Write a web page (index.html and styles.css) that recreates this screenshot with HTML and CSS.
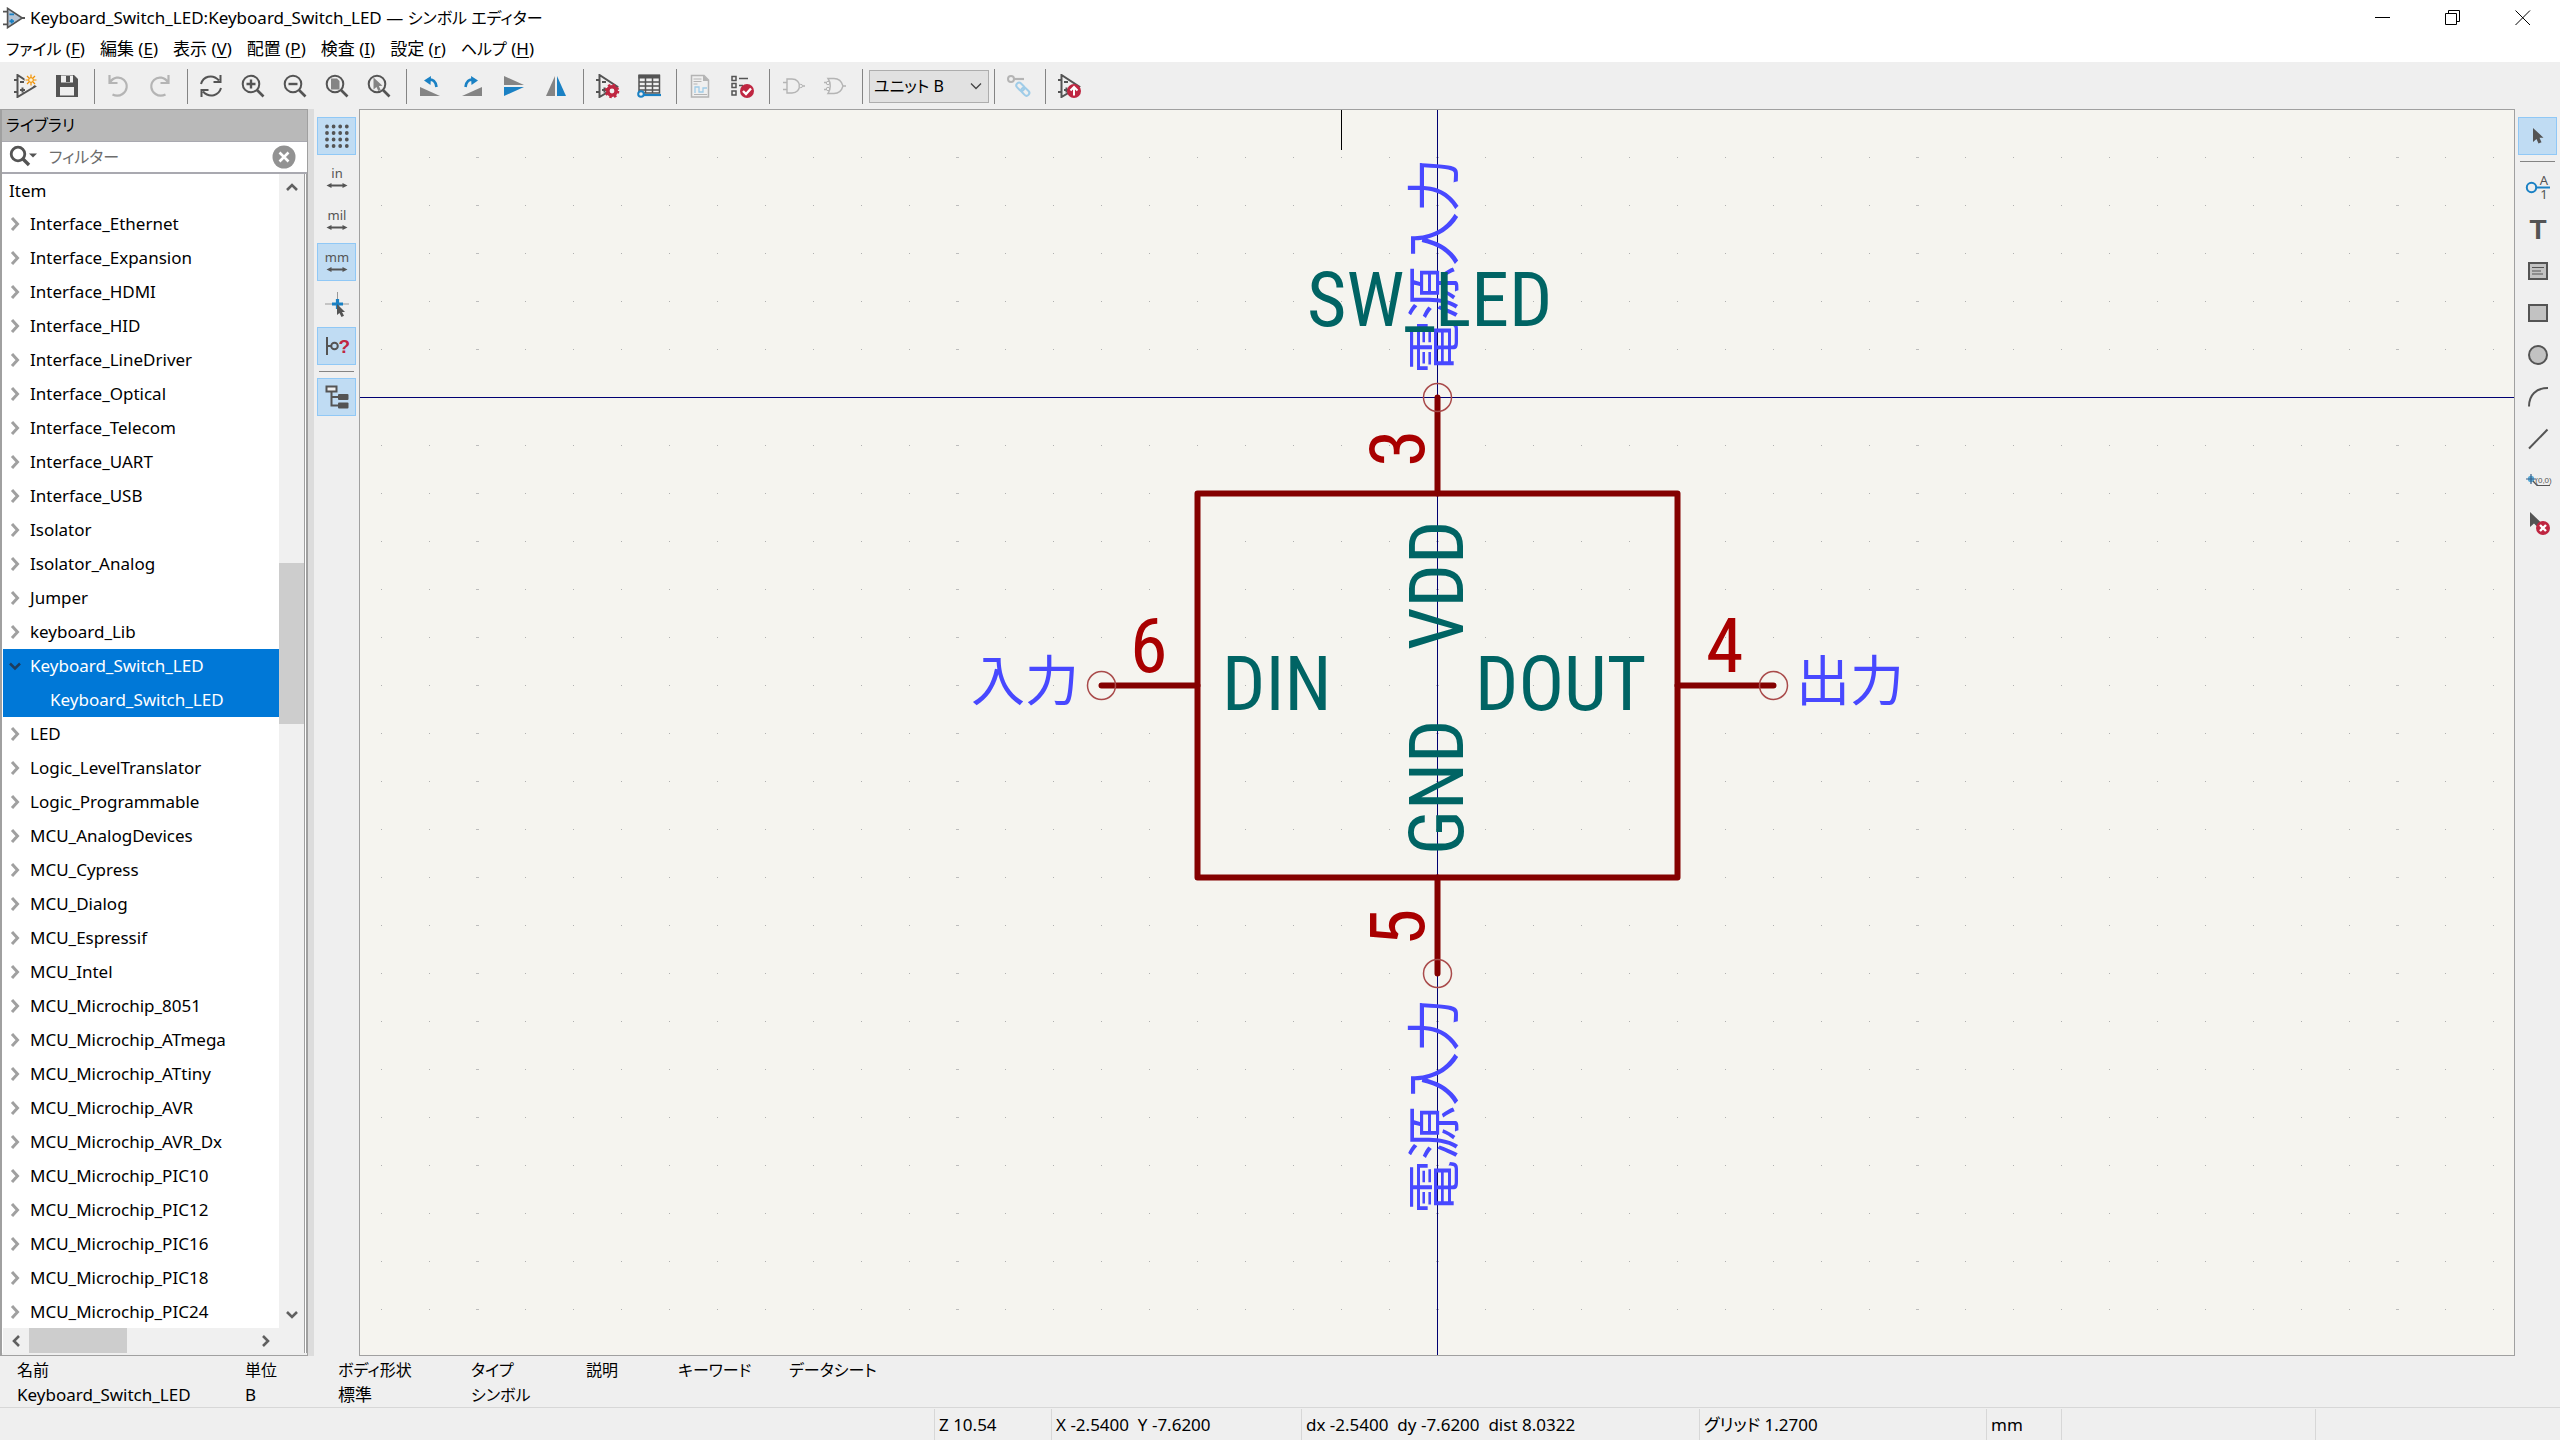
FILE: index.html
```html
<!DOCTYPE html>
<html lang="ja">
<head>
<meta charset="utf-8">
<title>Keyboard_Switch_LED:Keyboard_Switch_LED — シンボル エディター</title>
<link rel="stylesheet" href="styles.css">
</head>
<body>
<svg class="defs" aria-hidden="true">
  <defs>
    <symbol id="opamp" viewBox="0 0 24 24"><path class="ln" d="M4.500 1v22L22 12.500zM1 6h3.500M1 18h3.500M7 8h4M7 16h5M9.500 13.500v5"/></symbol>
    <symbol id="chev-r" viewBox="0 0 12 16"><path d="M3 2l5.500 6L3 14" fill="none" stroke="currentColor" stroke-width="3"/></symbol>
    <symbol id="chev-d" viewBox="0 0 12 16"><path d="M1 5.500l5 5 5-5" fill="none" stroke="currentColor" stroke-width="2.500"/></symbol>
    <symbol id="sb" viewBox="0 0 16 16"><path d="M3 11l5-5 5 5" fill="none" stroke="#606060" stroke-width="2.600"/></symbol>
    <symbol id="lens" viewBox="0 0 24 24"><circle class="ln" cx="10" cy="10" r="8.300"/><path d="M16 16l6.500 6.500" fill="none" stroke="#545454" stroke-width="2.600"/></symbol>
    <symbol id="dim" viewBox="0 0 24 24"><path d="M5 19.500h14" stroke="#545454" stroke-width="2"/><path d="M1.500 19.500l5-2.500v5zM22.500 19.500l-5-2.500v5z" fill="#545454"/></symbol>
  </defs>
</svg>

<header class="titlebar">
  <svg class="app-icon" viewBox="0 0 24 24"><path d="M5 1.500v21l16-10.500z" fill="#b5c3d3" stroke="#545454" stroke-width="1.800"/><path class="ln" d="M0 5h5M0 19h5M20 12h4"/><path class="bl" d="M7 8h5M7 15.500h5M9.500 13v5"/></svg>
  <h1>Keyboard_Switch_LED:Keyboard_Switch_LED — <span class="kana">シンボル エディター</span></h1>
  <div class="win-controls">
    <button aria-label="最小化"><svg viewBox="0 0 16 16"><path d="M0 7.500h15"/></svg></button>
    <button aria-label="元に戻す"><svg viewBox="0 0 16 16"><path d="M.500 3.500h11v11H.500zM3.500 3.500v-3h11v11h-3"/></svg></button>
    <button aria-label="閉じる"><svg viewBox="0 0 16 16"><path d="M.500.500l14.500 14.500M15 .500L.500 15"/></svg></button>
  </div>
</header>

<nav class="menubar">
  <button><span class="kana">ファイル</span> (<u>F</u>)</button><button>編集 (<u>E</u>)</button><button>表示 (<u>V</u>)</button><button>配置 (<u>P</u>)</button><button>検査 (<u>I</u>)</button><button>設定 (<u>r</u>)</button><button><span class="kana">ヘルプ</span> (<u>H</u>)</button>
</nav>

<div class="toolbar" role="toolbar">
  <button class="tool" aria-label="新規シンボル"><svg viewBox="0 0 24 24"><use href="#opamp"/><circle cx="18" cy="6" r="6.500" fill="#efefef"/><path d="M18 .500v11M12.500 6h11M14 2l8 8M22 2l-8 8" stroke="#f29100" stroke-width="1.200"/><circle cx="18" cy="6" r="2.300" fill="#fff3d0" stroke="#f29100"/></svg></button>
  <button class="tool" aria-label="保存"><svg viewBox="0 0 24 24"><path d="M1 1h18l4 4v18H1z" fill="#545454"/><path d="M6 1.500h12v7H6zM5 13h14v8.500H5z" fill="#efefef"/><path d="M11 2h4v6h-4z" fill="#545454"/></svg></button>
  <span class="sep"></span>
  <button class="tool" aria-label="元に戻す" disabled><svg viewBox="0 0 24 24"><path class="off" d="M3.500 1v8h8M4 8.500C7 3 14 2 18 6c4.500 4.500 3 11-1.500 14-3 2-7 2-10 .500"/></svg></button>
  <button class="tool" aria-label="やり直し" disabled><svg viewBox="0 0 24 24"><path class="off" d="M20.500 1v8h-8M20 8.500C17 3 10 2 6 6c-4.500 4.500-3 11 1.500 14 3 2 7 2 10 .500"/></svg></button>
  <span class="sep"></span>
  <button class="tool" aria-label="再描画"><svg viewBox="0 0 24 24"><path class="ln" d="M2 10C4 3 13-1 20 6.500M22 14c-2 7-11 11-18 3.500M21.500 1v7h-7M2.500 23v-7h7"/></svg></button>
  <button class="tool" aria-label="拡大"><svg viewBox="0 0 24 24"><use href="#lens"/><path class="hv" d="M10 5.500v9M5.500 10h9"/></svg></button>
  <button class="tool" aria-label="縮小"><svg viewBox="0 0 24 24"><use href="#lens"/><path class="hv" d="M5.500 10h9"/></svg></button>
  <button class="tool" aria-label="全体表示"><svg viewBox="0 0 24 24"><use href="#lens"/><path d="M6 4.500h6l2.500 2.500v8.500H6z" fill="#848484"/></svg></button>
  <button class="tool" aria-label="オブジェクトに合わせる"><svg viewBox="0 0 24 24"><use href="#lens"/><path d="M6.500 3.500v12l3-2.500 1.800 4 2.400-1-1.800-4 3.600-.300z" fill="#848484"/></svg></button>
  <span class="sep"></span>
  <button class="tool" aria-label="左回転"><svg viewBox="0 0 24 24"><path d="M2 13v9h20z" fill="#848484"/><path d="M10 6c5-1.500 8 2 8.500 7" fill="none" stroke="#1a81c4" stroke-width="2.600"/><path d="M6 6.500L13 2l-.500 9z" fill="#1a81c4"/></svg></button>
  <button class="tool" aria-label="右回転"><svg viewBox="0 0 24 24"><path d="M22 13v9H2z" fill="#848484"/><path d="M14 6c-5-1.500-8 2-8.500 7" fill="none" stroke="#1a81c4" stroke-width="2.600"/><path d="M18 6.500L11 2l.500 9z" fill="#1a81c4"/></svg></button>
  <button class="tool" aria-label="上下反転"><svg viewBox="0 0 24 24"><path d="M2 2v9h20z" fill="#848484"/><path d="M2 22v-9h20z" fill="#1a81c4"/></svg></button>
  <button class="tool" aria-label="左右反転"><svg viewBox="0 0 24 24"><path d="M2 22h9V2z" fill="#848484"/><path d="M22 22h-9V2z" fill="#1a81c4"/></svg></button>
  <span class="sep"></span>
  <button class="tool" aria-label="シンボルのプロパティ"><svg viewBox="0 0 24 24"><use href="#opamp"/><circle cx="17" cy="17" r="4.200" fill="#efefef" stroke="#bf2641" stroke-width="3.600"/><circle cx="17" cy="17" r="6.300" fill="none" stroke="#bf2641" stroke-width="2" stroke-dasharray="2.500 2.450"/></svg></button>
  <button class="tool" aria-label="ピンテーブル"><svg viewBox="0 0 24 24"><path class="thin" d="M2 1.500h20.500v17.500H2zM2 8h20M2 12h20M2 16h20M8.500 4v15M15.500 4v15"/><path d="M1.500.500h21.500v4H1.500z" fill="#545454"/><path d="M7 21h17" stroke="#1a81c4" stroke-width="2.200"/><circle cx="4" cy="20" r="2.800" fill="#efefef" stroke="#1a81c4" stroke-width="2"/></svg></button>
  <span class="sep"></span>
  <button class="tool" aria-label="データシート" disabled><svg viewBox="0 0 24 24"><path d="M3.500 1.500h12.500l4.500 4.500v17h-17z" fill="none" stroke="#b4b4b4" stroke-width="1.500"/><path d="M15 1l6 6h-6z" fill="#b4b4b4"/><path d="M5.500 5h8M5.500 7.500h8M5.500 10h4M6 20.500h13" stroke="#b4b4b4"/><path d="M7 19v-6h4v5h4v-4h4" fill="none" stroke="#9fcce8" stroke-width="1.300"/></svg></button>
  <button class="tool" aria-label="シンボルチェッカー"><svg viewBox="0 0 24 24"><path class="thin" d="M2 2.500h4v4H2zM2 9.500h4v4H2zM2 17h4v4H2zM9 4.500h9M9 11.500h4"/><circle cx="17" cy="17" r="7" fill="#bf2641"/><path d="M13 17l3 3 5-5.500" fill="none" stroke="#fff" stroke-width="2.400"/></svg></button>
  <span class="sep"></span>
  <button class="tool" aria-label="標準表示" disabled><svg viewBox="0 0 24 24"><path d="M6 5v14h5c10 0 10-14 0-14zM2 8.500h4M2 15.500h4M21.500 12H24" fill="none" stroke="#b4b4b4" stroke-width="1.400"/><circle cx="19.800" cy="12" r="1.700" fill="#efefef" stroke="#b4b4b4"/></svg></button>
  <button class="tool" aria-label="ド・モルガン表示" disabled><svg viewBox="0 0 24 24"><path d="M5 4.500h6c5 0 8 4 9 7.500-1 3.500-4 7.500-9 7.500H5c3-4 3-11 0-15zM1 8.500h2M1 15.500h2M20 12h3" fill="none" stroke="#b4b4b4" stroke-width="1.400"/><circle cx="5" cy="9" r="1.700" fill="#efefef" stroke="#b4b4b4"/><circle cx="5" cy="15" r="1.700" fill="#efefef" stroke="#b4b4b4"/></svg></button>
  <span class="sep"></span>
  <label class="combo"><select aria-label="ユニット"><option>ユニット B</option></select><svg viewBox="0 0 12 12"><path d="M1 3.500l5 5 5-5"/></svg></label>
  <span class="sep after-combo"></span>
  <button class="tool" aria-label="ピン同期" disabled><svg viewBox="0 0 24 24"><circle cx="5" cy="5" r="3" fill="none" stroke="#b4b4b4" stroke-width="2"/><path d="M8 5h10" stroke="#b4b4b4" stroke-width="2.200"/><g fill="none" stroke="#9fcce8" stroke-width="2" transform="rotate(45 17 15)"><rect x="9" y="12.500" width="9" height="5.500" rx="2.700"/><rect x="16" y="12.500" width="9" height="5.500" rx="2.700"/></g></svg></button>
  <span class="sep"></span>
  <button class="tool" aria-label="回路図に追加"><svg viewBox="0 0 24 24"><use href="#opamp"/><circle cx="17" cy="17" r="7" fill="#bf2641"/><path d="M17 21.500v-7M13.500 16.500l3.500-3.500 3.500 3.500" fill="none" stroke="#fff" stroke-width="2"/></svg></button>
</div>

<main class="workspace">
  <aside class="library">
    <h2>ライブラリ</h2>
    <div class="search">
      <svg class="search-icon" viewBox="0 0 28 24"><circle cx="9" cy="9" r="6.800" fill="none" stroke="#545454" stroke-width="2.800"/><path d="M14 14l6 6" stroke="#545454" stroke-width="3.400"/><path d="M20 8.500h8l-4 4z" fill="#545454"/></svg>
      <input type="text" aria-label="フィルター" placeholder="フィルター">
      <button aria-label="クリア"><svg viewBox="0 0 24 24"><circle cx="12" cy="12" r="11.500" fill="#929292"/><path d="M7.500 7.500l9 9M16.500 7.500l-9 9" stroke="#fff" stroke-width="2.600"/></svg></button>
    </div>
    <div class="tree-box">
      <div class="tree">
        <div class="tree-head">Item</div>
        <ul>
          <li><svg><use href="#chev-r"/></svg>Interface_Ethernet</li>
          <li><svg><use href="#chev-r"/></svg>Interface_Expansion</li>
          <li><svg><use href="#chev-r"/></svg>Interface_HDMI</li>
          <li><svg><use href="#chev-r"/></svg>Interface_HID</li>
          <li><svg><use href="#chev-r"/></svg>Interface_LineDriver</li>
          <li><svg><use href="#chev-r"/></svg>Interface_Optical</li>
          <li><svg><use href="#chev-r"/></svg>Interface_Telecom</li>
          <li><svg><use href="#chev-r"/></svg>Interface_UART</li>
          <li><svg><use href="#chev-r"/></svg>Interface_USB</li>
          <li><svg><use href="#chev-r"/></svg>Isolator</li>
          <li><svg><use href="#chev-r"/></svg>Isolator_Analog</li>
          <li><svg><use href="#chev-r"/></svg>Jumper</li>
          <li><svg><use href="#chev-r"/></svg>keyboard_Lib</li>
          <li class="selected open"><svg><use href="#chev-d"/></svg>Keyboard_Switch_LED</li>
          <li class="selected child">Keyboard_Switch_LED</li>
          <li><svg><use href="#chev-r"/></svg>LED</li>
          <li><svg><use href="#chev-r"/></svg>Logic_LevelTranslator</li>
          <li><svg><use href="#chev-r"/></svg>Logic_Programmable</li>
          <li><svg><use href="#chev-r"/></svg>MCU_AnalogDevices</li>
          <li><svg><use href="#chev-r"/></svg>MCU_Cypress</li>
          <li><svg><use href="#chev-r"/></svg>MCU_Dialog</li>
          <li><svg><use href="#chev-r"/></svg>MCU_Espressif</li>
          <li><svg><use href="#chev-r"/></svg>MCU_Intel</li>
          <li><svg><use href="#chev-r"/></svg>MCU_Microchip_8051</li>
          <li><svg><use href="#chev-r"/></svg>MCU_Microchip_ATmega</li>
          <li><svg><use href="#chev-r"/></svg>MCU_Microchip_ATtiny</li>
          <li><svg><use href="#chev-r"/></svg>MCU_Microchip_AVR</li>
          <li><svg><use href="#chev-r"/></svg>MCU_Microchip_AVR_Dx</li>
          <li><svg><use href="#chev-r"/></svg>MCU_Microchip_PIC10</li>
          <li><svg><use href="#chev-r"/></svg>MCU_Microchip_PIC12</li>
          <li><svg><use href="#chev-r"/></svg>MCU_Microchip_PIC16</li>
          <li><svg><use href="#chev-r"/></svg>MCU_Microchip_PIC18</li>
          <li><svg><use href="#chev-r"/></svg>MCU_Microchip_PIC24</li>
        </ul>
      </div>
      <div class="vbar"><svg><use href="#sb"/></svg><span class="v-before"></span><span class="v-thumb"></span><span class="v-after"></span><svg class="down"><use href="#sb"/></svg></div>
      <div class="hbar"><svg class="left"><use href="#sb"/></svg><span class="h-thumb"></span><span class="h-after"></span><svg class="right"><use href="#sb"/></svg></div>
    </div>
  </aside>

  <div class="sash"></div>

  <div class="side-tools left-tools" role="toolbar">
    <button class="tool on" aria-label="グリッド"><svg viewBox="0 0 24 24"><path d="M2 2.500h21M2 9h21M2 15.500h21M2 22h21" fill="none" stroke="#545454" stroke-width="3.800" stroke-linecap="round" stroke-dasharray="0 6.600"/></svg></button>
    <button class="tool"><svg viewBox="0 0 24 24"><text class="unit" x="12" y="12">in</text><use href="#dim"/></svg></button>
    <button class="tool"><svg viewBox="0 0 24 24"><text class="unit" x="12" y="12">mil</text><use href="#dim"/></svg></button>
    <button class="tool on"><svg viewBox="0 0 24 24"><text class="unit" x="12" y="12">mm</text><use href="#dim"/></svg></button>
    <button class="tool" aria-label="カーソル形状"><svg viewBox="0 0 24 24"><path d="M0 12h24M12.500 0v12" stroke="#999"/><path d="M7 12h11M12.500 7v10" stroke="#1a81c4" stroke-width="3.200"/><path d="M12 12v11l2.500-2 2 4 2.500-1.200-2-3.800h3z" fill="#545454"/></svg></button>
    <button class="tool on" aria-label="電気的タイプ"><svg viewBox="0 0 24 24"><path class="ln" d="M2 3v18M2 12h4"/><circle class="ln" cx="9.500" cy="12" r="3.300"/><text x="13.500" y="19" class="q">?</text></svg></button>
    <span class="sep"></span>
    <button class="tool on" aria-label="ツリー"><svg viewBox="0 0 24 24"><path d="M1.500 1.500h10v5h-10z" fill="#efefef" stroke="#545454" stroke-width="2"/><path class="ln" d="M6.500 7v13.500h8M6.500 12h8"/><rect x="13" y="9" width="10.500" height="6" rx="1" fill="#545454"/><rect x="13" y="17.500" width="10.500" height="6" rx="1" fill="#545454"/></svg></button>
  </div>

  <section class="canvas" aria-label="シンボル">
    <svg viewBox="360 110 2154 1245" preserveAspectRatio="xMidYMid slice">
      <defs>
        <pattern id="grid" x="1437" y="397" width="48" height="48" patternUnits="userSpaceOnUse"><rect width="1" height="1" fill="#b0b0b0"/></pattern>
        <pattern id="major" x="1436" y="397" width="480" height="48" patternUnits="userSpaceOnUse"><rect width="3" height="1" fill="#bdbdbd"/></pattern>
      </defs>
      <rect x="360" y="110" width="2154" height="1246" fill="url(#grid)"/>
      <rect x="360" y="110" width="2154" height="1246" fill="url(#major)"/>
      <path d="M360 397.500h2154M1437.500 110v1246" stroke="#000072"/>
      <path d="M1341.500 110v40" stroke="#000"/>
      <g class="etype">
        <text transform="translate(1454 374) rotate(-90)">電源入力</text>
        <text transform="translate(1454 1214) rotate(-90)">電源入力</text>
        <text x="971" y="701">入力</text>
        <text x="1796" y="701">出力</text>
      </g>
      <g class="body">
        <rect x="1197.500" y="493.500" width="480" height="384"/>
        <path d="M1437.500 397.500v96M1437.500 877.500v96M1101.500 685.500h96M1677.500 685.500h96"/>
      </g>
      <g class="pin-end"><circle cx="1437.500" cy="397.500" r="14"/><circle cx="1437.500" cy="973.500" r="14"/><circle cx="1101.500" cy="685.500" r="14"/><circle cx="1773.500" cy="685.500" r="14"/></g>
      <g class="pname">
        <text x="1307" y="326">SW_LED</text>
        <text x="1222" y="710">DIN</text>
        <text x="1475" y="710">DOUT</text>
        <text transform="translate(1463 650) rotate(-90)">VDD</text>
        <text transform="translate(1463 855) rotate(-90)">GND</text>
      </g>
      <g class="pnum">
        <text x="1130" y="672">6</text>
        <text x="1706" y="672">4</text>
        <text transform="translate(1424 467) rotate(-90)">3</text>
        <text transform="translate(1424 946) rotate(-90)">5</text>
      </g>
    </svg>
  </section>

  <div class="side-tools right-tools" role="toolbar">
    <button class="tool on" aria-label="選択"><svg viewBox="0 0 24 24"><path d="M7 4v14l3.500-3 2 4.500 3-1.200-2-4.600h4z" fill="#545454"/></svg></button>
    <span class="sep"></span>
    <button class="tool" aria-label="ピン追加"><svg viewBox="0 0 24 24"><circle cx="5.500" cy="12.500" r="4.700" fill="none" stroke="#1a81c4" stroke-width="2"/><path d="M10.500 12.500H24" stroke="#1a81c4" stroke-width="2"/><text class="unit" x="18" y="10">A</text><text class="unit" x="18" y="24">1</text></svg></button>
    <button class="tool" aria-label="テキスト追加"><svg viewBox="0 0 24 24"><text class="big-t" x="12" y="22">T</text></svg></button>
    <button class="tool" aria-label="テキストボックス"><svg viewBox="0 0 24 24"><rect class="shape" x="3" y="4" width="18" height="16"/><path d="M6 8.500h12M6 12h9M6 15h11" stroke="#545454" stroke-width="1.200"/></svg></button>
    <button class="tool" aria-label="矩形"><svg viewBox="0 0 24 24"><rect class="shape" x="3" y="4" width="18" height="16"/></svg></button>
    <button class="tool" aria-label="円"><svg viewBox="0 0 24 24"><circle class="shape" cx="12" cy="12" r="9"/></svg></button>
    <button class="tool" aria-label="円弧"><svg viewBox="0 0 24 24"><path class="ln" d="M3 21.500C3 10 10 3 22 3"/></svg></button>
    <button class="tool" aria-label="線"><svg viewBox="0 0 24 24"><path class="ln" d="M3 21.500L21.500 2.500"/></svg></button>
    <button class="tool" aria-label="アンカー"><svg viewBox="0 0 24 24"><circle cx="5" cy="10" r="3.200" fill="#5cacd8"/><path d="M0 10h10M5 5v10" stroke="#36618a" stroke-width="1.200"/><path d="M7 12l4 4.500h13" fill="none" stroke="#545454" stroke-width="1.200"/><text class="coord" x="17.500" y="14">(0,0)</text></svg></button>
    <button class="tool" aria-label="削除"><svg viewBox="0 0 24 24"><path d="M4 1v15l4-3.500 3 3 5-3z" fill="#545454"/><circle cx="17" cy="17" r="7" fill="#bf2641"/><path d="M14 14l6 6M20 14l-6 6" stroke="#fff" stroke-width="2.400"/></svg></button>
  </div>
</main>

<section class="info">
  <table>
    <colgroup><col class="c1"><col class="c2"><col class="c3"><col class="c4"><col class="c5"><col class="c6"><col></colgroup>
    <tr><th>名前</th><th>単位</th><th>ボディ形状</th><th>タイプ</th><th>説明</th><th>キーワード</th><th>データシート</th></tr>
    <tr><td>Keyboard_Switch_LED</td><td>B</td><td>標準</td><td><span class="kana">シンボル</span></td><td></td><td></td><td></td></tr>
  </table>
</section>

<footer class="status">
  <span class="grow"></span>
  <span class="s-zoom">Z 10.54</span>
  <span class="s-xy">X -2.5400&nbsp; Y -7.6200</span>
  <span class="s-delta">dx -2.5400&nbsp; dy -7.6200&nbsp; dist 8.0322</span>
  <span class="s-grid">グリッド 1.2700</span>
  <span class="s-unit">mm</span>
  <span class="s-pad"></span>
  <span class="s-end"></span>
</footer>
</body>
</html>
```
FILE: styles.css
```css
* { box-sizing: border-box; }

body {
  margin: 0;
  height: 100vh;
  display: flex;
  flex-direction: column;
  overflow: hidden;
  background: #efefef;
  color: #000;
  font: 17px/24px "Noto Sans", "Noto Sans CJK JP", sans-serif;
  font-feature-settings: "palt";
}

button, input, select { font: inherit; color: inherit; font-feature-settings: inherit; }
button { border: 0; padding: 0; background: none; }
.defs { position: absolute; width: 0; height: 0; }
.kana { font-size: 16px; }

.ln { fill: none; stroke: #545454; stroke-width: 2; }
.thin { fill: none; stroke: #545454; stroke-width: 1.5; }
.hv { fill: none; stroke: #545454; stroke-width: 2.4; }
.bl { fill: none; stroke: #1a81c4; stroke-width: 2; }
.off { fill: none; stroke: #b4b4b4; stroke-width: 2.2; }
.shape { fill: #c2c2c2; stroke: #545454; stroke-width: 2; }
.unit { font: 13px "Noto Sans", sans-serif; fill: #545454; text-anchor: middle; }
.coord { font: 8px "Liberation Sans", sans-serif; fill: #545454; text-anchor: middle; }
.big-t { font: bold 28px "Liberation Sans", sans-serif; fill: #545454; text-anchor: middle; }
.q { font: bold 19px "Liberation Sans", sans-serif; fill: #bf2641; }

/* title and menu */
.titlebar { flex: none; display: flex; align-items: center; height: 35px; background: #fff; }
.app-icon { width: 22px; height: 22px; margin: 0 5px 0 3px; }
.titlebar h1 { margin: 0; flex: 1; font-size: 17px; font-weight: 400; }
.win-controls { display: flex; padding-right: 2px; }
.win-controls button { width: 70px; height: 34px; display: grid; place-items: center; }
.win-controls svg { width: 16px; height: 16px; fill: none; stroke: #000; }
.menubar { flex: none; display: flex; gap: 15px; height: 27px; padding-left: 6px; background: #fff; }
.menubar u { text-underline-offset: 2px; }

/* toolbars */
.toolbar { flex: none; display: flex; align-items: center; gap: 4px; height: 47px; padding: 1px 6px 0; }
.tool { flex: none; width: 38px; height: 38px; display: grid; place-items: center; }
.tool svg { width: 24px; height: 24px; overflow: visible; }
.tool.on { background: #c0dcf3; border: 1px solid #90c8f6; }
.toolbar .sep { width: 1px; height: 35px; margin-left: 4px; background: #848484; }
.toolbar .sep.after-combo { margin-left: 1px; }
.combo { position: relative; width: 120px; height: 33px; margin-left: 2px; }
.combo select { width: 100%; height: 100%; padding: 0 4px; appearance: none; border: 1px solid #adadad; border-radius: 0; background: #e1e1e1; font-size: 16px; }
.combo svg { position: absolute; right: 7px; top: 10px; width: 12px; height: 12px; fill: none; stroke: #444; stroke-width: 1.3; }

.workspace { flex: 1; min-height: 0; display: flex; }
.side-tools { flex: none; display: flex; flex-direction: column; gap: 4px; width: 45px; padding: 8px 3px; }
.side-tools .tool { width: 39px; }
.side-tools .sep { flex: none; height: 1px; margin: 2px; background: #848484; }
.sash { flex: none; width: 6px; background: #dcdcdc; }

/* library panel */
.library { flex: none; width: 308px; display: flex; flex-direction: column; border: solid #a0a0a0; border-width: 1px 1px 1px 2px; }
.library h2 { flex: none; margin: 0; height: 31px; padding-left: 4px; background: #b9b9b9; font-size: 16px; line-height: 30px; font-weight: 400; }
.search { flex: none; display: flex; align-items: center; height: 33px; padding: 0 11px 0 7px; background: #fff; border: solid #a9a9b0; border-width: 1px 0 2px; }
.search-icon { width: 28px; height: 24px; }
.search input { flex: 1; min-width: 0; height: 28px; margin-left: 12px; padding: 0; border: 0; outline: 0; font-size: 16px; }
.search input::placeholder { color: #6d6d6d; opacity: 1; }
.search button, .search button svg { display: block; width: 24px; height: 24px; }
.tree-box { flex: 1; min-height: 0; display: grid; grid-template: minmax(0, 1fr) 25px / 1fr 25px; margin-bottom: 2px; background: #fff; border-left: 1px solid #fff; border-right: 3px double #a0a0a0; }
.tree { overflow: hidden; }
.tree-head { height: 33px; padding-left: 6px; line-height: 34px; }
.tree ul { margin: 0; padding: 0; list-style: none; }
.tree li { display: flex; align-items: center; height: 34px; padding-left: 6px; white-space: nowrap; }
.tree li svg { width: 12px; height: 16px; margin-right: 9px; color: #a0a0a0; }
.tree li.selected { background: #0078d7; color: #fff; }
.tree li.open svg { color: #1d3c5c; }
.tree li.child { padding-left: 47px; }
.vbar { grid-row: 1 / 3; grid-column: 2; display: flex; flex-direction: column; padding-bottom: 25px; background: #f0f0f0; }
.hbar { grid-area: 2 / 1; display: flex; background: #f0f0f0; }
.vbar svg, .hbar svg { flex: none; width: 16px; height: 16px; margin: 5px; }
.down { transform: rotate(180deg); }
.left { transform: rotate(-90deg); }
.right { transform: rotate(90deg); }
.v-before { flex: 363; }
.v-thumb { flex: 161; background: #cdcdcd; }
.v-after { flex: 579; }
.h-thumb { flex: 98; background: #cdcdcd; }
.h-after { flex: 126; }

/* drawing area */
.canvas { flex: 1; min-width: 0; border: 1px solid #a0a0a0; background: #f5f4ef; }
.canvas svg { display: block; width: 100%; height: 100%; }
.body { fill: none; stroke: #840000; stroke-width: 6; stroke-linecap: round; stroke-linejoin: round; }
.pin-end { fill: none; stroke: #a94a4a; stroke-width: 1.5; }
.pname { font: 76px "Roboto Condensed", "DejaVu Sans Condensed", sans-serif; fill: #006464; }
.pnum { font: 76px "Roboto Condensed", "DejaVu Sans Condensed", sans-serif; fill: #a90000; }
.etype { font: 54px "Noto Sans CJK JP", sans-serif; font-feature-settings: normal; fill: #4848ff; }

/* message panel and status bar */
.info { flex: none; height: 51px; padding-top: 1px; }
.info table { border-collapse: collapse; table-layout: fixed; width: 100%; margin-left: 17px; }
.info th, .info td { padding: 0; height: 25px; font-weight: 400; text-align: left; white-space: nowrap; }
.info th { font-size: 16px; }
.c1 { width: 228px; }
.c2 { width: 93px; }
.c3 { width: 133px; }
.c4 { width: 115px; }
.c5 { width: 92px; }
.c6 { width: 111px; }
.status { flex: none; display: flex; height: 33px; padding-top: 1px; border-top: 1px solid #d7d7d7; line-height: 32px; white-space: nowrap; }
.status span { border-left: 1px solid #d7d7d7; padding-left: 4px; }
.status .grow { flex: 1; border: 0; }
.s-zoom { width: 117px; }
.s-xy { width: 250px; }
.s-delta { width: 398px; }
.s-grid { width: 287px; }
.s-unit { width: 75px; }
.s-pad { width: 254px; }
.s-end { width: 245px; }
```
